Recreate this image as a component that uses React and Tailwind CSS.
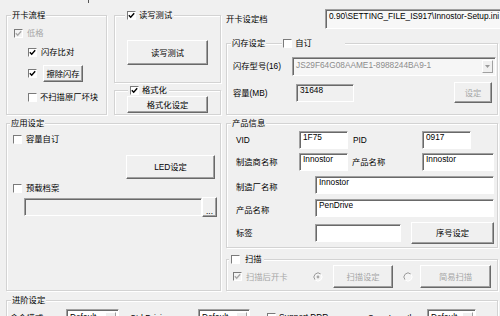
import React from "react";

// classic win32 dialog widgets, shrunk to ~0.75 scale like the screenshot

function Check({ checked = false, disabled = false }) {
  return (
    <span
      className={`relative block w-[9px] h-[9px] shrink-0 border border-t-[#7a7a7a] border-l-[#7a7a7a] border-r-white border-b-white ${
        disabled ? "bg-[#f4f4f4]" : "bg-white"
      }`}
    >
      {checked && (
        <svg className="absolute left-0 top-0" width="7" height="7" viewBox="0 0 7 7">
          <path
            d="M0.8 3.2 L2.7 5.2 L6.2 1.2"
            fill="none"
            stroke={disabled ? "#a8a8a8" : "#000"}
            strokeWidth="1.4"
          />
        </svg>
      )}
    </span>
  );
}

function Radio({ on = false }) {
  return (
    <svg width="10" height="10" viewBox="0 0 10 10" className="shrink-0">
      <circle cx="5" cy="5" r="4" fill="#f4f4f4" />
      <path d="M7.83 2.17 A4 4 0 0 0 2.17 7.83" fill="none" stroke="#9a9a9a" />
      <path d="M2.17 7.83 A4 4 0 0 0 7.83 2.17" fill="none" stroke="#ffffff" />
      {on && <circle cx="5" cy="5" r="1.4" fill="#a8a8a8" />}
    </svg>
  );
}

function Btn({ children, className = "", disabled = false }) {
  return (
    <div
      className={`flex items-center justify-center shrink-0 bg-[#f0f0f0] border border-t-white border-l-white border-r-[#696969] border-b-[#696969] shadow-[inset_-1px_-1px_0_#a0a0a0] whitespace-nowrap ${
        disabled ? "text-[#a6a6a6]" : "text-black"
      } ${className}`}
    >
      {children}
    </div>
  );
}

function Field({ value = "", className = "", ro = false }) {
  return (
    <div
      className={`shrink-0 border border-t-[#a0a0a0] border-l-[#a0a0a0] border-r-white border-b-white shadow-[inset_1px_1px_0_#696969] pl-[3px] leading-[11px] whitespace-nowrap overflow-hidden ${
        ro ? "bg-[#f0f0f0]" : "bg-white"
      } ${className}`}
    >
      {value}
    </div>
  );
}

function Select({ value, className = "", disabled = false }) {
  return (
    <div
      className={`flex shrink-0 border border-t-[#a0a0a0] border-l-[#a0a0a0] border-r-white border-b-white shadow-[inset_1px_1px_0_#696969] ${
        disabled ? "bg-[#f6f6f6] text-[#8c8c8c]" : "bg-white text-black"
      } ${className}`}
    >
      <span className="flex-1 pl-[3px] leading-[11px] pt-[2px] overflow-hidden whitespace-nowrap">{value}</span>
      <span className="my-[2px] mr-[2px] w-[11px] h-[13px] flex items-center justify-center border border-t-white border-l-white border-r-[#a0a0a0] border-b-[#a0a0a0] bg-[#f0f0f0]">
        <svg width="5" height="3" viewBox="0 0 5 3">
          <path d="M0 0 H5 L2.5 3 Z" fill={disabled ? "#9a9a9a" : "#333"} />
        </svg>
      </span>
    </div>
  );
}

function Group({ legend, className = "", children }) {
  return (
    <div
      className={`flex flex-col shrink-0 border border-[#d3d3d3] shadow-[inset_1px_1px_0_#ffffff,1px_1px_0_#ffffff] ${className}`}
    >
      <div className="flex items-center h-[12px] mt-[-7px]">{legend}</div>
      {children}
    </div>
  );
}

const Txt = ({ children, className = "" }) => (
  <span className={`whitespace-nowrap leading-[12px] shrink-0 ${className}`}>{children}</span>
);

export default function App() {
  return (
    <div className="relative w-[500px] h-[316px] overflow-hidden bg-[#f0f0f0] text-[8.3px] leading-[12px] text-black font-['Liberation_Sans','Noto_Sans_CJK_SC',sans-serif]">
      <span className="absolute left-[88px] top-0 w-px h-[3px] bg-[#555]" />

      <div className="flex pl-[6px]">
        {/* left column */}
        <div className="w-[215px] shrink-0 flex flex-col">
          <div className="mt-[15px] flex">
            <Group
              className="w-[101px] h-[100px]"
              legend={<Txt className="ml-[4px] px-[1px] bg-[#f0f0f0]">开卡流程</Txt>}
            >
              <div className="mt-[6px] ml-[7px] h-[12px] flex items-center gap-[4px] text-[#a6a6a6]">
                <Check checked disabled />
                <Txt>低格</Txt>
              </div>
              <div className="mt-[7px] ml-[21px] h-[12px] flex items-center gap-[4px]">
                <Check checked />
                <Txt>闪存比对</Txt>
              </div>
              <div className="mt-[7px] ml-[21px] h-[17px] flex items-center">
                <Check checked />
                <Btn className="ml-[6px] w-[40px] h-[17px]">擦除闪存</Btn>
              </div>
              <div className="mt-[9px] ml-[21px] h-[12px] flex items-center gap-[3px]">
                <Check />
                <Txt>不扫描原厂坏块</Txt>
              </div>
            </Group>

            <div className="ml-[7px] w-[107px] flex flex-col">
              <Group
                className="h-[68px]"
                legend={
                  <span className="ml-[10px] px-[2px] flex items-center gap-[3px] bg-[#f0f0f0]">
                    <Check checked />
                    <Txt>读写测试</Txt>
                  </span>
                }
              >
                <Btn className="mt-[19px] ml-[12px] w-[81px] h-[25px]">读写测试</Btn>
              </Group>
              <Group
                className="mt-[7px] h-[25px]"
                legend={
                  <span className="ml-[13px] px-[2px] flex items-center gap-[3px] bg-[#f0f0f0]">
                    <Check checked />
                    <Txt>格式化</Txt>
                  </span>
                }
              >
                <Btn className="ml-[12px] w-[81px] h-[17px]">格式化设定</Btn>
              </Group>
            </div>
          </div>

          <Group
            className="mt-[8px] h-[168px]"
            legend={<Txt className="ml-[3px] px-[1px] bg-[#f0f0f0]">应用设定</Txt>}
          >
            <div className="mt-[4px] ml-[6px] h-[12px] flex items-center gap-[4px]">
              <Check />
              <Txt>容量自订</Txt>
            </div>
            <Btn className="mt-[10px] ml-[119px] w-[89px] h-[24px]">LED设定</Btn>
            <div className="mt-[3px] ml-[6px] h-[12px] flex items-center gap-[4px]">
              <Check />
              <Txt>预载档案</Txt>
            </div>
            <div className="mt-[3px] ml-[17px] h-[20px] flex">
              <Field ro className="mt-[1px] w-[178px] h-[18px]" />
              <Btn className="w-[15px] h-[20px] !items-end pb-[1px] leading-[8px]">...</Btn>
            </div>
          </Group>
        </div>

        {/* right column */}
        <div className="ml-[5px] w-[272px] shrink-0 flex flex-col">
          <div className="mt-[9px] h-[20px] flex items-center">
            <Txt className="w-[99px]">开卡设定档</Txt>
            <Field
              ro
              className="w-[180px] h-[20px] pt-[1px] !bg-[#f7f7f7]"
              value="0.90\SETTING_FILE_IS917\Innostor-Setup.ini"
            />
          </div>

          <Group
            className="mt-[14px] h-[72px]"
            legend={
              <>
                <Txt className="ml-[4px] px-[1px] bg-[#f0f0f0]">闪存设定</Txt>
                <span className="ml-[16px] pl-[1px] w-[63px] flex items-center gap-[3px] bg-[#f0f0f0]">
                  <Check />
                  <Txt>自订</Txt>
                </span>
              </>
            }
          >
            <div className="mt-[7px] ml-[6px] h-[20px] flex items-center">
              <Txt className="w-[59px]">闪存型号(16)</Txt>
              <Select disabled className="w-[204px] h-[19px]" value="JS29F64G08AAME1-8988244BA9-1" />
            </div>
            <div className="mt-[6px] ml-[6px] h-[21px] flex items-center">
              <Txt className="w-[63px]">容量(MB)</Txt>
              <Field ro className="w-[58px] h-[18px]" value="31648" />
              <Btn disabled className="ml-[100px] w-[38px] h-[21px]">设定</Btn>
            </div>
          </Group>

          <Group
            className="mt-[8px] h-[125px]"
            legend={<Txt className="ml-[4px] px-[1px] bg-[#f0f0f0]">产品信息</Txt>}
          >
            <div className="mt-[2px] ml-[9px] h-[18px] flex items-center">
              <Txt className="w-[63px]">VID</Txt>
              <Field className="w-[49px] h-[18px]" value="1F75" />
              <Txt className="ml-[5px] w-[69px]">PID</Txt>
              <Field className="w-[49px] h-[18px]" value="0917" />
            </div>
            <div className="mt-[4px] ml-[9px] h-[18px] flex items-center">
              <Txt className="w-[63px]">制造商名称</Txt>
              <Field className="w-[49px] h-[18px]" value="Innostor" />
              <Txt className="ml-[4px] w-[70px]">产品名称</Txt>
              <Field className="w-[72px] h-[18px]" value="Innostor" />
            </div>
            <div className="mt-[5px] ml-[9px] h-[18px] flex items-center">
              <Txt className="w-[79px] pt-[3px]">制造厂名称</Txt>
              <Field className="w-[179px] h-[18px]" value="Innostor" />
            </div>
            <div className="mt-[5px] ml-[9px] h-[18px] flex items-center">
              <Txt className="w-[79px] pt-[3px]">产品名称</Txt>
              <Field className="w-[179px] h-[18px]" value="PenDrive" />
            </div>
            <div className="mt-[5px] ml-[9px] h-[22px] flex items-center">
              <Txt className="w-[79px]">标签</Txt>
              <Field className="w-[86px] h-[18px]" />
              <Btn className="ml-[10px] w-[83px] h-[22px]">序号设定</Btn>
            </div>
          </Group>

          <Group
            className="mt-[11px] h-[32px]"
            legend={
              <span className="ml-[2px] px-[2px] flex items-center gap-[5px] bg-[#f0f0f0]">
                <Check />
                <Txt>扫描</Txt>
              </span>
            }
          >
            <div className="ml-[6px] h-[23px] flex items-center">
              <span className="w-[80px] flex items-center gap-[4px] text-[#a6a6a6]">
                <Check checked disabled />
                <Txt>扫描后开卡</Txt>
              </span>
              <Radio on />
              <Btn disabled className="ml-[10px] w-[60px] h-[23px]">扫描设定</Btn>
              <span className="ml-[10px]">
                <Radio />
              </span>
              <Btn disabled className="ml-[7px] w-[71px] h-[23px]">简易扫描</Btn>
            </div>
          </Group>
        </div>
      </div>

      <Group
        className="mt-[9px] ml-[6px] w-[492px] h-[40px]"
        legend={<Txt className="ml-[4px] px-[1px] bg-[#f0f0f0]">进阶设定</Txt>}
      >
        <div className="mt-[3px] ml-[3px] h-[18px] flex items-start">
          <Txt className="w-[56px] pt-[3px]">命令模式</Txt>
          <Select className="w-[53px] h-[18px]" value="Default" />
          <Txt className="ml-[11px] w-[68px] pt-[3px]">Ctrl Driving</Txt>
          <Select className="w-[52px] h-[18px]" value="Default" />
          <span className="ml-[17px] w-[101px] pt-[2px] flex items-center gap-[3px]">
            <Check />
            <Txt>Support DDR</Txt>
          </span>
          <Txt className="w-[59px] pt-[3px]">Sync Length</Txt>
          <Select className="w-[49px] h-[18px]" value="Default" />
        </div>
      </Group>
    </div>
  );
}
